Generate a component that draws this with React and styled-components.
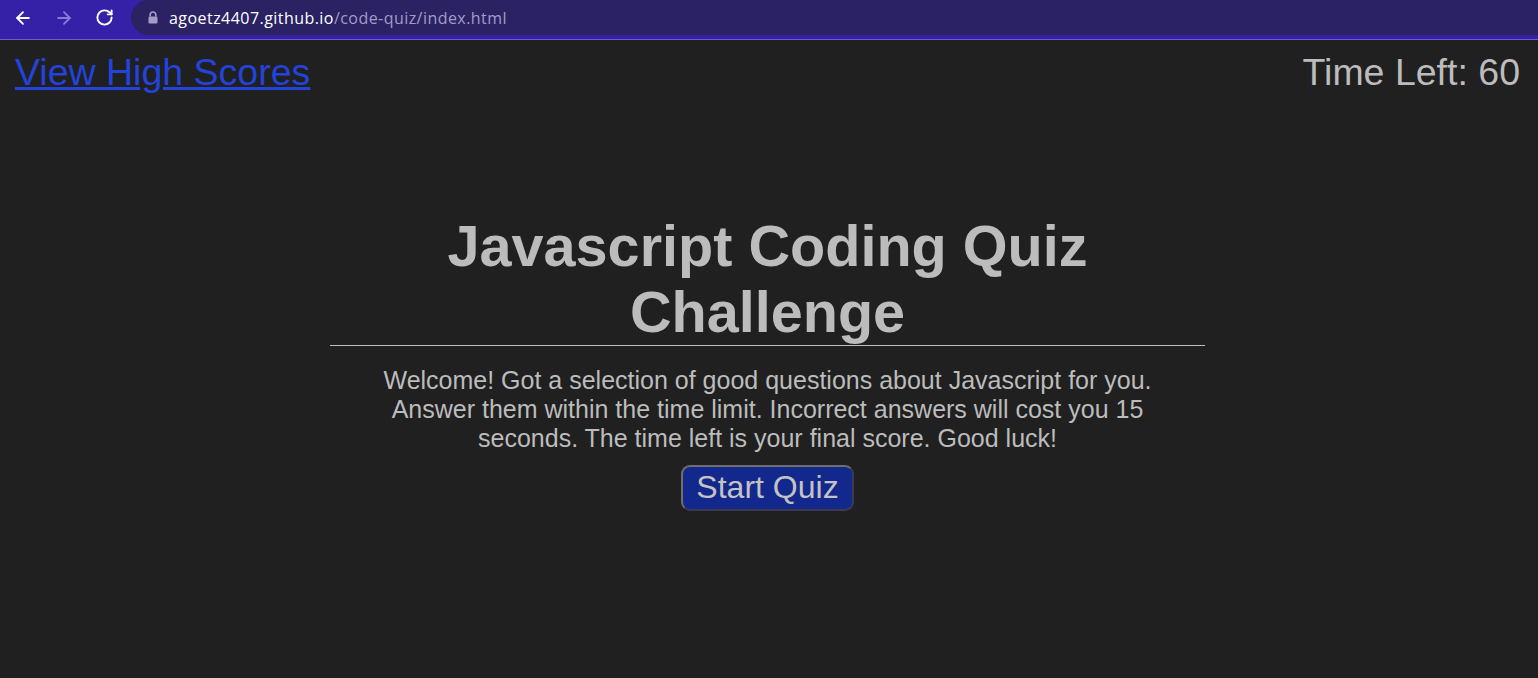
import React from 'react';
import styled, { createGlobalStyle } from 'styled-components';
import { ArrowLeft, ArrowRight, RotateCw } from 'lucide-react';

const GlobalStyle = createGlobalStyle`
  html, body {
    margin: 0;
    padding: 0;
    background: #202020;
  }
  body {
    font-family: "Liberation Sans", Arial, sans-serif;
    color: #bcbcbc;
  }
`;

const Toolbar = styled.div`
  display: flex;
  height: 40px;
  box-sizing: border-box;
  background: #3421a8;
  border-bottom: 1px solid #6b5ccb;
`;

const NavButtons = styled.div`
  display: flex;
  align-items: center;
  gap: 21px;
  height: 35px;
  padding: 0 0 0 13px;
  width: 131px;
  box-sizing: border-box;
`;

const NavIcon = styled.span`
  display: flex;
  color: ${p => (p.$dim ? '#8a7bd6' : '#ffffff')};
`;

const Omnibox = styled.div`
  flex: 1;
  display: flex;
  align-items: center;
  gap: 11px;
  height: 35px;
  padding-left: 17px;
  background: #2a2262;
  border-radius: 18px 0 0 18px;
  font-family: "Open Sans", "Noto Sans", sans-serif;
  font-size: 16px;
  letter-spacing: 0.45px;
`;

const Host = styled.span`
  color: #ffffff;
`;

const Path = styled.span`
  color: #a39cc9;
`;

const Page = styled.div`
  min-height: calc(100vh - 40px);
`;

const Header = styled.header`
  display: flex;
  justify-content: space-between;
  padding: 11px 18px 0 15px;
  font-size: 37.5px;
`;

const ScoresLink = styled.a`
  color: #2343d9;
  text-decoration: underline;
`;

const Timer = styled.span`
  color: #bcbcbc;
`;

const Main = styled.main`
  width: 875px;
  margin: 119px 0 0 calc(50% - 439px);
  display: flex;
  flex-direction: column;
  align-items: center;
  text-align: center;
`;

const Title = styled.h1`
  margin: 0;
  width: 100%;
  font-size: 57.6px;
  font-weight: bold;
  color: #bcbcbc;
  border-bottom: 1px solid #bcbcbc;
`;

const Intro = styled.p`
  width: 800px;
  margin: 20px 0 0;
  font-size: 25px;
  line-height: 29px;
`;

const StartButton = styled.button`
  margin-top: 12px;
  padding: 2px 13px 3px;
  font-family: "Liberation Sans", Arial, sans-serif;
  font-size: 32px;
  color: #c3c3c3;
  background: #13288c;
  border: 2px solid #6e6e6e;
  border-right-color: #3a3a52;
  border-bottom-color: #3a3a52;
  border-radius: 9px;
  cursor: pointer;
`;

function LockIcon() {
  return (
    <svg width="10" height="13" viewBox="0 0 10 13">
      <path d="M2.2 5.5V3.8a2.8 2.8 0 0 1 5.6 0v1.7" fill="none" stroke="#a39cc9" strokeWidth="1.6" />
      <rect x="0.5" y="5.5" width="9" height="7" rx="1.2" fill="#a39cc9" />
    </svg>
  );
}

export default function App() {
  return (
    <>
      <GlobalStyle />
      <Toolbar>
        <NavButtons>
          <NavIcon><ArrowLeft size={20} strokeWidth={2.2} /></NavIcon>
          <NavIcon $dim><ArrowRight size={20} strokeWidth={2.2} /></NavIcon>
          <NavIcon><RotateCw size={19} strokeWidth={2.4} /></NavIcon>
        </NavButtons>
        <Omnibox>
          <LockIcon />
          <span>
            <Host>agoetz4407.github.io</Host>
            <Path>/code-quiz/index.html</Path>
          </span>
        </Omnibox>
      </Toolbar>
      <Page>
        <Header>
          <ScoresLink href="#">View High Scores</ScoresLink>
          <Timer>Time Left: 60</Timer>
        </Header>
        <Main>
          <Title>Javascript Coding Quiz Challenge</Title>
          <Intro>
            Welcome! Got a selection of good questions about Javascript for you. Answer them within the time limit. Incorrect answers will cost you 15 seconds. The time left is your final score. Good luck!
          </Intro>
          <StartButton>Start Quiz</StartButton>
        </Main>
      </Page>
    </>
  );
}
